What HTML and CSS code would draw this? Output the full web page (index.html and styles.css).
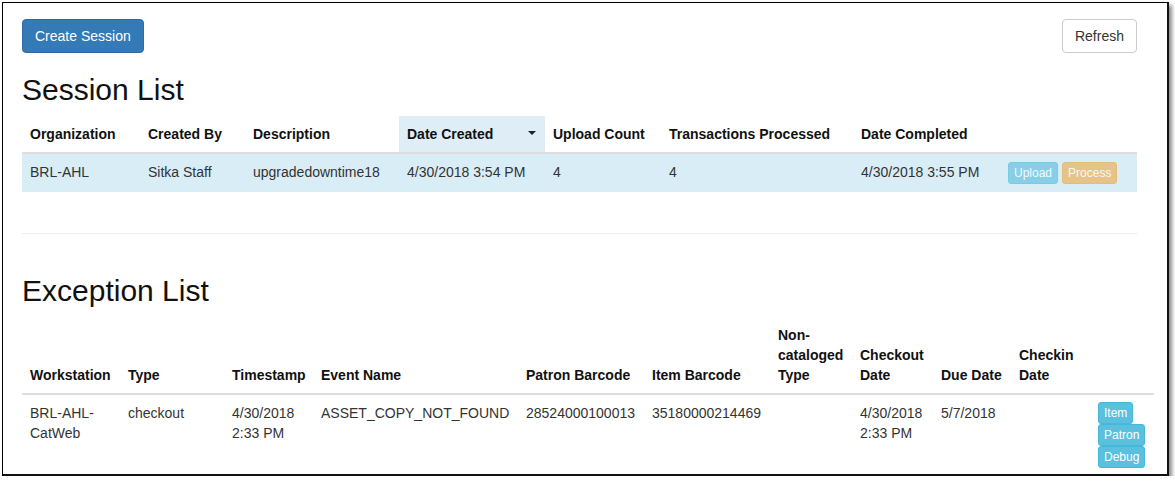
FILE: index.html
```html
<!DOCTYPE html>
<html>
<head>
<meta charset="utf-8">
<link rel="stylesheet" href="styles.css">
</head>
<body>
<div class="frame">
  <div class="toolbar">
    <button class="btn btn-primary">Create Session</button>
    <button class="btn btn-default">Refresh</button>
  </div>
  <h2>Session List</h2>
  <table class="tbl session">
    <colgroup>
      <col class="c118"><col class="c105"><col class="c154"><col class="c146"><col class="c116"><col class="c192"><col class="c147"><col class="c137">
    </colgroup>
    <thead>
      <tr>
        <th>Organization</th>
        <th>Created By</th>
        <th>Description</th>
        <th class="sorted"><span class="sort-wrap">Date Created<span class="caret"></span></span></th>
        <th>Upload Count</th>
        <th>Transactions Processed</th>
        <th>Date Completed</th>
        <th></th>
      </tr>
    </thead>
    <tbody>
      <tr class="info">
        <td>BRL-AHL</td>
        <td>Sitka Staff</td>
        <td>upgradedowntime18</td>
        <td>4/30/2018 3:54 PM</td>
        <td>4</td>
        <td>4</td>
        <td>4/30/2018 3:55 PM</td>
        <td class="actions-row"><button class="btn btn-xs btn-info" disabled>Upload</button><button class="btn btn-xs btn-warning" disabled>Process</button></td>
      </tr>
    </tbody>
  </table>
  <hr>
  <h2>Exception List</h2>
  <table class="tbl exception">
    <colgroup>
      <col class="c98"><col class="c104"><col class="c89"><col class="c205"><col class="c126"><col class="c126"><col class="c82"><col class="c81"><col class="c78"><col class="c79"><col class="c64">
    </colgroup>
    <thead>
      <tr>
        <th>Workstation</th>
        <th>Type</th>
        <th>Timestamp</th>
        <th>Event Name</th>
        <th>Patron Barcode</th>
        <th>Item Barcode</th>
        <th>Non-cataloged Type</th>
        <th>Checkout Date</th>
        <th>Due Date</th>
        <th>Checkin Date</th>
        <th></th>
      </tr>
    </thead>
    <tbody>
      <tr>
        <td>BRL-AHL-CatWeb</td>
        <td>checkout</td>
        <td>4/30/2018 2:33 PM</td>
        <td>ASSET_COPY_NOT_FOUND</td>
        <td>28524000100013</td>
        <td>35180000214469</td>
        <td></td>
        <td>4/30/2018 2:33 PM</td>
        <td>5/7/2018</td>
        <td></td>
        <td class="stack-cell"><div class="stack"><button class="btn btn-xs btn-info">Item</button><button class="btn btn-xs btn-info">Patron</button><button class="btn btn-xs btn-info">Debug</button></div></td>
      </tr>
    </tbody>
  </table>
</div>
</body>
</html>
```
FILE: styles.css
```css
html, body {
  margin: 0;
  padding: 0;
  background: #fff;
}
body {
  font-family: "Liberation Sans", Arial, sans-serif;
  font-size: 14px;
  line-height: 20px;
  color: #333;
}
.frame {
  box-sizing: border-box;
  margin: 2px 0 0 2px;
  width: 1167px;
  height: 474px;
  border-left: 1px solid #000;
  border-top: 1px solid #000;
  border-right: 2px solid #111;
  border-bottom: 2px solid #111;
  box-shadow: 3px 3px 4px rgba(0, 0, 0, 0.45);
  padding: 16px 0 0 19px;
  overflow: hidden;
}
.toolbar {
  width: 1115px;
  display: flex;
  justify-content: space-between;
  align-items: flex-start;
}
.btn {
  font-family: inherit;
  font-size: 14px;
  line-height: 20px;
  padding: 6px 12px;
  border: 1px solid transparent;
  border-radius: 4px;
  cursor: pointer;
}
.btn-primary {
  background: #337ab7;
  border-color: #2e6da4;
  color: #fff;
}
.btn-default {
  background: #fff;
  border-color: #ccc;
  color: #333;
}
.btn-xs {
  font-size: 12px;
  line-height: 18px;
  padding: 1px 5px;
  border-radius: 3px;
}
.btn-info {
  background: #5bc0de;
  border-color: #46b8da;
  color: #fff;
}
.btn-warning {
  background: #f0ad4e;
  border-color: #eea236;
  color: #fff;
}
.btn[disabled] {
  opacity: 0.65;
  cursor: not-allowed;
}
h2 {
  font-family: inherit;
  font-weight: 500;
  font-size: 30px;
  line-height: 33px;
  margin: 20px 0 10px;
  color: #111;
}
.tbl {
  border-collapse: collapse;
  border-spacing: 0;
  table-layout: fixed;
  margin-bottom: 20px;
}
.session { width: 1115px; }
.exception { width: 1132px; }
.tbl th {
  text-align: left;
  font-weight: bold;
  color: #111;
  vertical-align: bottom;
  padding: 8px;
  border-bottom: 2px solid #ddd;
}
.tbl td {
  padding: 8px;
  vertical-align: top;
  border-top: 1px solid #ddd;
}
.tbl tr.info td {
  background: #d9edf7;
}
.tbl th.sorted {
  background: #dfedf6;
}
.sort-wrap {
  display: flex;
  justify-content: space-between;
  align-items: center;
}
.caret {
  width: 0;
  height: 0;
  border-left: 4px solid transparent;
  border-right: 4px solid transparent;
  border-top: 4px solid #222;
  margin-right: 1px;
  margin-top: -2px;
}
.actions-row .btn + .btn {
  margin-left: 4px;
}
.stack {
  display: flex;
  flex-direction: column;
  align-items: flex-start;
  margin-top: -1px;
}
hr {
  width: 1115px;
  margin: 41px 0 40px;
  border: 0;
  border-top: 1px solid #eee;
}
.c118 { width: 118px; } .c105 { width: 105px; } .c154 { width: 154px; } .c146 { width: 146px; }
.c116 { width: 116px; } .c192 { width: 192px; } .c147 { width: 147px; } .c137 { width: 137px; }
.c98 { width: 98px; } .c104 { width: 104px; } .c89 { width: 89px; } .c205 { width: 205px; }
.c126 { width: 126px; } .c82 { width: 82px; } .c81 { width: 81px; } .c78 { width: 78px; }
.c79 { width: 79px; } .c64 { width: 64px; }
```
